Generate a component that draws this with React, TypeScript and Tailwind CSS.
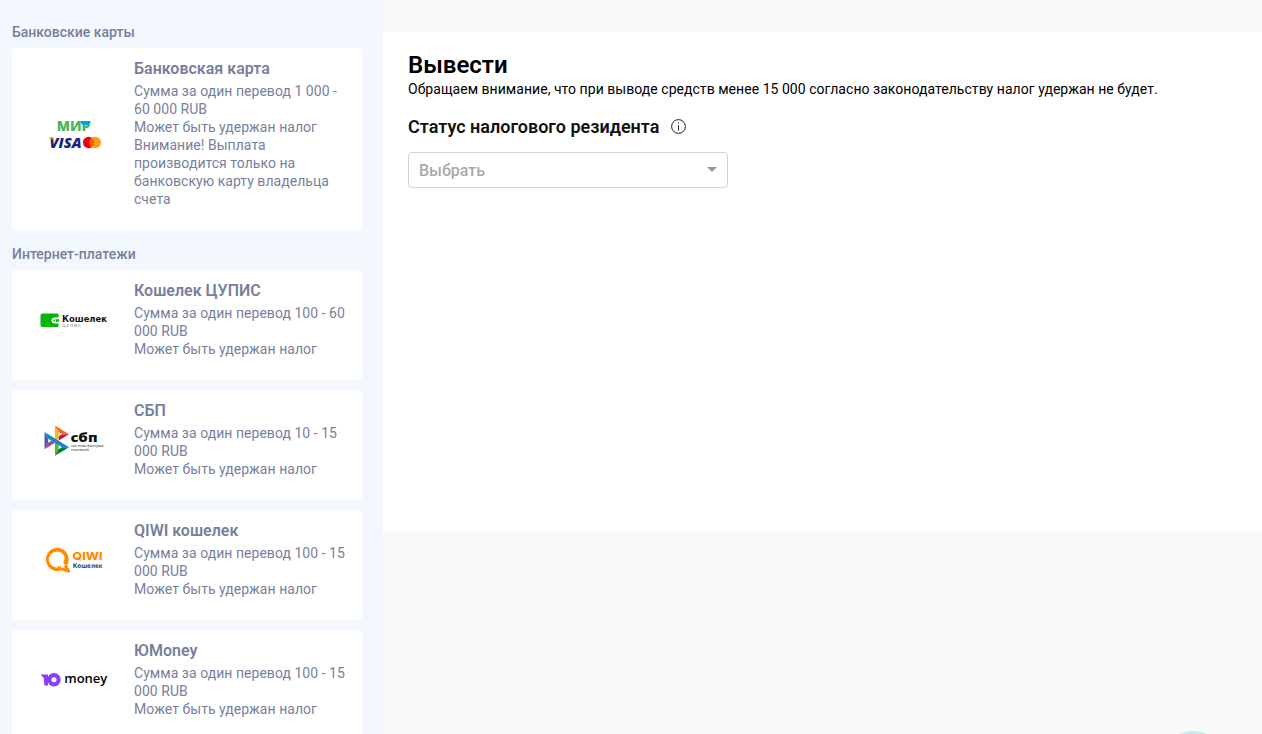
import type { ReactNode } from 'react'

function CardsLogo() {
  return (
    <svg width="90" height="50" viewBox="0 0 90 50">
      <text x="26.700" y="21.500" textLength="33.500" lengthAdjust="spacingAndGlyphs" fontSize="13.500" fontWeight="800" fill="#4db45e" className="font-['Open_Sans',sans-serif]">МИР</text>
      <path d="M50.500 12h10c.3 2-.8 4-3.500 4h-3.500c-1.500 0-2.700-1.900-3-4z" fill="#0f9bd8" />
      <text x="19.500" y="38.500" textLength="32" lengthAdjust="spacingAndGlyphs" fontSize="14.500" fontWeight="800" fontStyle="italic" fill="#1a237b" className="font-['Open_Sans',sans-serif]">VISA</text>
      <path d="M18 28h4c1 0 1.500.4 1.700 1.300l.5 2.700c-1.500-2-3.500-3.300-6.200-4z" fill="#f7a21c" />
      <circle cx="58.700" cy="33.500" r="5.800" fill="#eb001b" />
      <circle cx="65.200" cy="33.500" r="5.800" fill="#f79e1b" />
      <path d="M62 28.800a5.700 5.700 0 0 1 0 9.400 5.700 5.700 0 0 1 0-9.400z" fill="#ff5f00" />
    </svg>
  )
}

function CupisLogo() {
  return (
    <svg width="90" height="40" viewBox="0 0 90 40">
      <path d="M12.500 13.500H27c1 0 1.600.6 1.600 1.600v2.400h-3.800a3 3 0 0 0 0 6h3.800v1.900c0 1-.6 1.600-1.600 1.600H12.500c-1.200 0-2-.8-2-2v-9.500c0-1.200.8-2 2-2z" fill="#04b50c" />
      <path d="M25.500 19.200h3.500v2.600h-3.500z" fill="#04b50c" />
      <circle cx="23.500" cy="20.500" r="2" fill="#fff" />
      <circle cx="24" cy="20.500" r=".9" fill="#04b50c" />
      <text x="32" y="21.800" textLength="45" lengthAdjust="spacingAndGlyphs" fontSize="9.200" fontWeight="700" fill="#111" className="font-['DejaVu_Sans',sans-serif]">Кошелек</text>
      <text x="32.500" y="26.500" textLength="18" fontSize="4" fill="#555" className="font-['Open_Sans',sans-serif]">ЦУПИС</text>
    </svg>
  )
}

function SbpLogo() {
  return (
    <svg width="90" height="50" viewBox="0 0 90 50">
      <g transform="translate(14.500 10.500) scale(.253)">
        <path d="M0 26.100l14.500 26v15.800L0 93.900z" fill="#5b57a2" />
        <path d="M55.800 42.600l13.600-8.300h27.900L55.800 59.700z" fill="#d90751" />
        <path d="M55.700 26l.1 34.400-14.600-9V0z" fill="#fab718" />
        <path d="M97.300 34.300H69.400L55.700 26 41.200 0z" fill="#ed6f26" />
        <path d="M55.800 94V77.300l-14.600-8.800V120z" fill="#63b22f" />
        <path d="M69.400 85.700L14.500 52.100 0 26.100l97.200 59.600z" fill="#1487c9" />
        <path d="M41.200 120l14.600-26 13.600-8.300h27.800z" fill="#017f36" />
        <path d="M0 93.900l41.300-25.400L27.500 60l-13 7.900z" fill="#984995" />
      </g>
      <text x="40.500" y="26.500" textLength="27" lengthAdjust="spacingAndGlyphs" fontSize="13" fontWeight="800" fill="#111" className="font-['Open_Sans',sans-serif]">сбп</text>
      <text x="41" y="31.700" textLength="32.500" lengthAdjust="spacingAndGlyphs" fontSize="3.800" fill="#111" className="font-['Open_Sans',sans-serif]">система быстрых</text>
      <text x="41" y="36" textLength="18" lengthAdjust="spacingAndGlyphs" fontSize="3.800" fill="#111" className="font-['Open_Sans',sans-serif]">платежей</text>
    </svg>
  )
}

function QiwiLogo() {
  return (
    <svg width="90" height="50" viewBox="0 0 90 50">
      <path fillRule="evenodd" d="M27 12.700a11.700 11.700 0 0 1 10.300 17.300c-.4 1 .3 2 1.500 3.500 1 1.300 1.700 2.800 1.200 4-3 .4-5.500-1-8.200-2.200A11.700 11.700 0 1 1 27 12.700zm0 3.700a8 8 0 1 0 1.200 15.900l-.6-1.600 2.400 1 .3-2 1.700 1.500.5-2.300 1.900.4-1.300-2.400 1.400-.6-1.200-1.400 1.600-.6A8 8 0 0 0 27 16.400z" fill="#ff8c00" />
      <path d="M32.500 27l1 2.300 2.300.2-1.600 1.700.5 2.300-2.200-1.200-2 1 .4-2.200-1.500-1.600 2.200-.3z" fill="#fff" />
      <text x="42.500" y="24.700" textLength="30" lengthAdjust="spacingAndGlyphs" fontSize="11" fontWeight="800" fill="#ff8c00" className="font-[Inter,sans-serif]">QIWI</text>
      <text x="42.700" y="32.700" textLength="30" lengthAdjust="spacingAndGlyphs" fontSize="6.500" fontWeight="700" fill="#444b55" className="font-['DejaVu_Sans',sans-serif]">Кошелек</text>
    </svg>
  )
}

function YooMoneyLogo() {
  return (
    <svg width="90" height="40" viewBox="0 0 90 40">
      <path d="M10.500 14.500h7.500v11h-3.600l-.6-7.500z" fill="#8b3ffd" />
      <circle cx="24" cy="19.700" r="4.600" fill="none" stroke="#8b3ffd" strokeWidth="4.200" />
      <text x="34.300" y="23.200" textLength="43" lengthAdjust="spacingAndGlyphs" fontSize="12.500" fontWeight="600" fill="#000" className="font-['Open_Sans',sans-serif]">money</text>
    </svg>
  )
}

type MethodProps = {
  logo: ReactNode
  title: string
  amount: string
  note?: string
}

function Method({ logo, title, amount, note }: MethodProps) {
  return (
    <button type="button" className="flex w-[350px] rounded bg-white text-left">
      <div className="flex w-[122px] shrink-0 items-center self-stretch pb-2.5 pl-[18px]">{logo}</div>
      <div className="w-[216px] pt-2.5 pb-[22px]">
        <div className="mb-0.5 text-base/[22px] font-semibold">{title}</div>
        <div className="text-sm/[18px] tracking-[0.04px]">
          <p>{`Сумма за один перевод ${amount}`}</p>
          <p>Может быть удержан налог</p>
          {note && <p>{note}</p>}
        </div>
      </div>
    </button>
  )
}

export default function App() {
  return (
    <div className="flex h-screen overflow-hidden bg-[#f9f9f9] font-[Roboto,sans-serif]">

      <aside className="w-[383px] shrink-0 overflow-hidden bg-[#f3f8ff] px-3 pt-[23px] text-[#777f9c]">
        <h2 className="mb-[7px] text-sm/[18px] font-medium">Банковские карты</h2>
        <Method
          logo={<CardsLogo />}
          title="Банковская карта"
          amount="1 000 - 60 000 RUB"
          note="Внимание! Выплата производится только на банковскую карту владельца счета"
        />

        <h2 className="mt-[15px] mb-[7px] text-sm/[18px] font-medium">Интернет-платежи</h2>
        <div className="flex flex-col gap-2.5">
          <Method logo={<CupisLogo />} title="Кошелек ЦУПИС" amount="100 - 60 000 RUB" />
          <Method logo={<SbpLogo />} title="СБП" amount="10 - 15 000 RUB" />
          <Method logo={<QiwiLogo />} title="QIWI кошелек" amount="100 - 15 000 RUB" />
          <Method logo={<YooMoneyLogo />} title="ЮMoney" amount="100 - 15 000 RUB" />
        </div>
      </aside>

      <main className="mt-8 h-[500px] flex-1 bg-white px-[25px] pt-[19px] text-black">
        <h1 className="text-2xl/7 font-semibold">Вывести</h1>
        <p className="text-sm/5 tracking-[0.04px]">Обращаем внимание, что при выводе средств менее 15 000 согласно законодательству налог удержан не будет.</p>
        <div className="mt-4 flex items-center gap-3">
          <h3 className="text-lg/6 font-semibold text-[#111]">Статус налогового резидента</h3>
          <svg width="16" height="16" viewBox="0 0 16 16" fill="none">
            <circle cx="7.500" cy="7.500" r="6.900" stroke="#222" strokeWidth="1" />
            <path d="M7.500 6v5.500M7.500 3.500v1.200" stroke="#222" strokeWidth="1" />
          </svg>
        </div>
        <button type="button" className="mt-[13px] flex h-9 w-80 items-center justify-between rounded border border-[#ced2dc] px-2.5 pt-0.5 text-base font-medium text-[#aaa]">
          Выбрать
          <span className="-mt-1 border-x-5 border-t-5 border-x-transparent border-t-[#999]" />
        </button>
      </main>

      {/* support chat bubble */}
      <div className="fixed top-[731px] left-[1159px] size-[68px] rounded-full bg-[#c5e8f5]" />
    </div>
  )
}
